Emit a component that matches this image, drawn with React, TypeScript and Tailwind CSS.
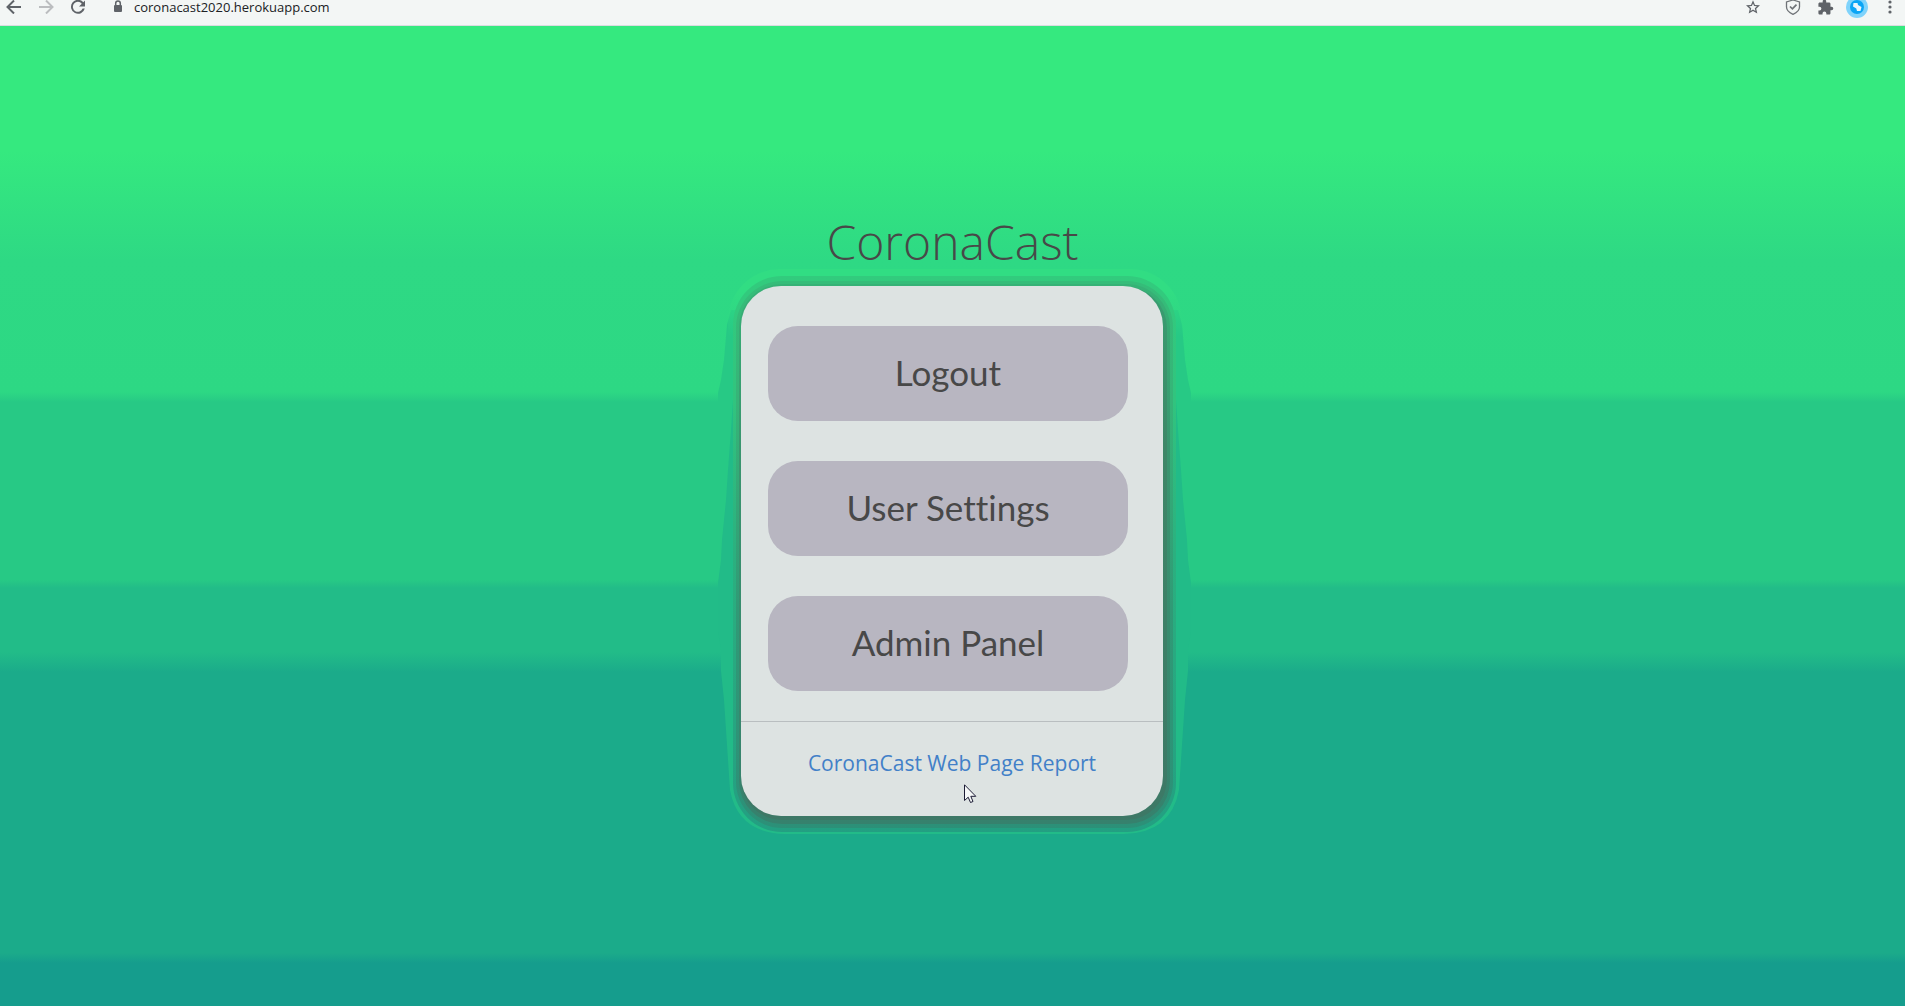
const ink = "#5f6368";

function Toolbar() {
  return (
    <header className="h-[26px] shrink-0 border-b border-[#dadce0] bg-[#f3f6f5]">
      <div className="flex h-[14px] items-center">
        <button aria-label="Back" className="ml-[6px] flex">
          <svg width="16" height="14" viewBox="0 1 16 14" fill="none" stroke={ink} strokeWidth="2">
            <path d="M15 8H2M8 1.500L1.500 8L8 14.500" />
          </svg>
        </button>
        <button aria-label="Forward" className="ml-4 flex">
          <svg width="16" height="14" viewBox="0 1 16 14" fill="none" stroke="#bbbdbf" strokeWidth="2">
            <path d="M1 8H14M8 1.500L14.500 8L8 14.500" />
          </svg>
        </button>
        <button aria-label="Reload" className="ml-4 flex">
          <svg width="16" height="14" viewBox="0 1 16 14" fill={ink}>
            <path d="M13.300 3.200A7 7 0 1 0 14.800 9.500H12.600A5 5 0 1 1 11.800 4.700L9 7.500H15V1.500Z" />
          </svg>
        </button>
        <svg className="ml-[26px]" width="12" height="14" viewBox="0 1 12 14" fill={ink}>
          <path d="M3 6H9Q10 6 10 7V12Q10 13 9 13H3Q2 13 2 12V7Q2 6 3 6Z" />
          <path d="M3.700 6V4.300A2.300 2.300 0 0 1 8.300 4.300V6" fill="none" stroke={ink} strokeWidth="1.500" />
        </svg>
        <span className="ml-[10px] font-['Open_Sans','Noto_Sans',sans-serif] text-[13px] leading-[14px] text-[#202124]">
          coronacast2020.herokuapp.com
        </span>
        <button aria-label="Bookmark" className="ml-auto flex">
          <svg width="14" height="14" viewBox="0 0 24 24" fill={ink}>
            <path d="M24 9.200L15.400 8.500L12 0.500L8.600 8.500L0 9.200L6.500 14.900L4.600 23.300L12 18.800L19.400 23.300L17.500 14.900ZM12 16.300L7.800 18.800L8.900 14L5.200 10.800L10.100 10.400L12 5.800L13.900 10.400L18.800 10.800L15.100 14L16.200 18.800Z" />
          </svg>
        </button>
        <button aria-label="Protection" className="ml-[25px] flex">
          <svg width="16" height="16" viewBox="0 0 16 16" fill="none" stroke="#6f7377" strokeWidth="1.300">
            <path d="M8 1L14.500 3V8Q14.500 12.500 8 15.300Q1.500 12.500 1.500 8V3Z" />
            <path d="M5 7.500L7.400 9.900L11.500 5.600" strokeWidth="1.700" />
          </svg>
        </button>
        <button aria-label="Extensions" className="ml-4 flex">
          <svg width="17" height="17" viewBox="0 0 24 24" fill={ink}>
            <path d="M20.500 11H19V7c0-1.100-.9-2-2-2h-4V3.500a2.500 2.500 0 0 0-5 0V5H4c-1.100 0-2 .9-2 2v3.800h1.500a2.700 2.700 0 0 1 0 5.400H2V20c0 1.100.9 2 2 2h3.800v-1.500a2.700 2.700 0 0 1 5.400 0V22H17c1.100 0 2-.9 2-2v-4h1.500a2.500 2.500 0 0 0 0-5z" />
          </svg>
        </button>
        <button aria-label="Profile" className="ml-3 flex">
          <svg width="22" height="22" viewBox="0 0 22 22">
            <circle cx="11" cy="11" r="11" fill="#7fd3fb" />
            <circle cx="11" cy="11" r="7" fill="#0aa5f5" />
            <path d="M7.500 7L11.500 7L12 9L15.500 11L14.500 15L11 15L10.300 12.500L7 10.500Z" fill="#e9f6fd" />
          </svg>
        </button>
        <button aria-label="Menu" className="mr-[13px] ml-5 flex">
          <svg width="4" height="14" viewBox="0 1 4 14" fill={ink}>
            <circle cx="2" cy="3" r="1.600" />
            <circle cx="2" cy="8" r="1.600" />
            <circle cx="2" cy="13" r="1.600" />
          </svg>
        </button>
      </div>
    </header>
  );
}

const upperFlare =
  "M741 310L731 310L727 325L724 360L721 380L718 393L718 404L741 404Z";
const middleFlare =
  "M741 400L733 400L731 430L728 470L726 500L722 540L721 560L718 583L718 632L721 650L721 671L724 700L726 730L728 760L730 790Q738 833 785 834H958V400Z";

// Banded glow around the card, drawn from the outer rings inwards.
function CardGlow() {
  return (
    <svg
      aria-hidden="true"
      className="pointer-events-none absolute -top-9 -left-[41px]"
      width="510"
      height="600"
      viewBox="700 250 510 600"
    >
      <defs>
        <linearGradient id="halo" x1="0" y1="0" x2="0" y2="1">
          <stop offset="0" stopColor="#31dd83" />
          <stop offset="0.04" stopColor="#31dd83" />
          <stop offset="0.12" stopColor="#2fd684" stopOpacity="0" />
        </linearGradient>
        <linearGradient id="outer" x1="0" y1="0" x2="0" y2="1">
          <stop offset="0" stopColor="#32cb7d" />
          <stop offset="0.22" stopColor="#31c47e" />
          <stop offset="0.5" stopColor="#2bb07f" />
          <stop offset="1" stopColor="#239f82" />
        </linearGradient>
        <linearGradient id="middle" x1="0" y1="0" x2="0" y2="1">
          <stop offset="0" stopColor="#35bd79" />
          <stop offset="0.22" stopColor="#36b478" />
          <stop offset="0.6" stopColor="#309a76" />
          <stop offset="1" stopColor="#2c9078" />
        </linearGradient>
        <linearGradient id="inner" x1="0" y1="0" x2="0" y2="1">
          <stop offset="0" stopColor="#36b276" />
          <stop offset="0.3" stopColor="#3a966f" />
          <stop offset="1" stopColor="#36816d" />
        </linearGradient>
        <linearGradient id="core" x1="0" y1="0" x2="0" y2="1">
          <stop offset="0" stopColor="#389f71" />
          <stop offset="0.3" stopColor="#3f8768" />
          <stop offset="1" stopColor="#3d7866" />
        </linearGradient>
      </defs>
      <g fill="#27c985">
        <path d={upperFlare} />
        <path d={upperFlare} transform="translate(1909 0) scale(-1 1)" />
      </g>
      <g fill="#22bb88">
        <path d={middleFlare} />
        <path d={middleFlare} transform="translate(1909 0) scale(-1 1)" />
      </g>
      <rect x="728" y="269" width="454" height="563" rx="52" fill="url(#halo)" />
      <rect x="733" y="276" width="443" height="556" rx="49" fill="url(#outer)" />
      <rect x="736" y="281" width="437" height="547" rx="46" fill="url(#middle)" />
      <rect x="739" y="284" width="431" height="540" rx="43" fill="url(#inner)" />
      <rect x="741" y="287" width="426" height="533" rx="41" fill="url(#core)" />
    </svg>
  );
}

const actions = ["Logout", "User Settings", "Admin Panel"];

export default function App() {
  return (
    <div className="flex min-h-screen flex-col">
      <Toolbar />
      <main className="flex flex-1 flex-col items-center bg-[linear-gradient(180deg,#35e97f_0px,#35e97f_125px,#2ed984_235px,#2dd884_366px,#27c985_376px,#27c985_554px,#22bc88_562px,#22bc88_626px,#1bab8a_646px,#1bab8a_927px,#159d8d_937px,#159d8d_100%)] pt-[184px] pb-10">
        <h1 className="font-['Open_Sans','Noto_Sans',sans-serif] text-5xl leading-[64px] font-light text-[#484848]">
          CoronaCast
        </h1>
        <div className="relative mt-3 mr-px w-[422px]">
          <CardGlow />
          <section className="relative rounded-[40px] bg-[#dde3e2] pt-10">
            <div className="flex flex-col gap-10 pr-[35px] pl-[27px]">
              {actions.map((label) => (
                <button
                  key={label}
                  className="h-[95px] rounded-[30px] bg-[#b8b6c1] pb-[2px] font-[Lato,sans-serif] text-[35px] text-[#484848] [font-variant-ligatures:none]"
                >
                  {label}
                </button>
              ))}
            </div>
            <hr className="mt-[30px] border-[#b9bec0]" />
            <p className="pt-[26px] pb-[38px] text-center font-['Open_Sans','Noto_Sans',sans-serif] text-[21px] leading-[30px]">
              <a href="#report" className="text-[#4280c8]">
                CoronaCast Web Page Report
              </a>
            </p>
            <svg className="pointer-events-none absolute top-[498px] left-[223px]" width="13" height="20" viewBox="0 0 13 20">
              <path
                d="M0.500 0.800V16.500L4.200 13.200L6.500 18.500L9 17.500L6.800 12.300H11.800Z"
                fill="#f6f8f8"
                stroke="#1c1c35"
                strokeWidth="1"
              />
            </svg>
          </section>
        </div>
      </main>
    </div>
  );
}
